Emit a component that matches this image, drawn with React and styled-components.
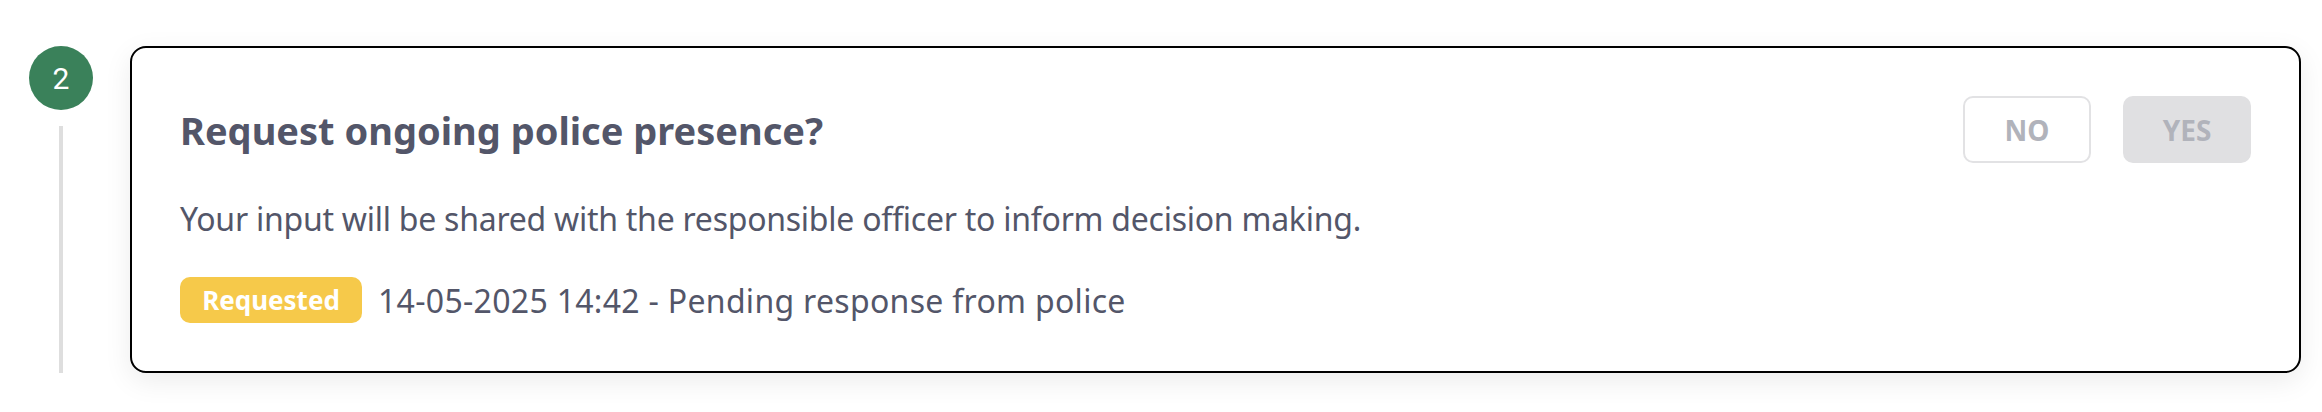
import React from 'react';
import styled, { createGlobalStyle } from 'styled-components';

const GlobalStyle = createGlobalStyle`
  body {
    margin: 0;
    background: #fff;
    font-family: "Noto Sans", "Liberation Sans", sans-serif;
  }
`;

// Linha da página: timeline à esquerda, card à direita
const Row = styled.div`
  display: flex;
  gap: 37px;
  padding: 46px 21px 0 29px;
  height: 412px;
  box-sizing: border-box;
`;

const Timeline = styled.div`
  display: flex;
  flex-direction: column;
  align-items: center;
  gap: 16px;
  width: 64px;
  height: 327px;
`;

const StepCircle = styled.div`
  width: 64px;
  height: 64px;
  border-radius: 50%;
  background: #3a815a;
  color: #fff;
  display: flex;
  align-items: center;
  justify-content: center;
  font-family: Roboto, sans-serif;
  font-size: 30px;
  font-weight: 400;
  flex-shrink: 0;
`;

const StepLine = styled.div`
  width: 4px;
  flex: 1;
  background: #dedede;
`;

const Card = styled.div`
  flex: 1;
  align-self: flex-start;
  border: 2px solid #000;
  border-radius: 16px;
  padding: 48px;
  background: #fff;
  box-shadow: 0 8px 28px rgba(0, 0, 0, 0.08);
  color: #535669;
`;

const Header = styled.div`
  display: flex;
  justify-content: space-between;
  align-items: center;
`;

const Title = styled.h2`
  margin: 0;
  font-size: 38px;
  font-weight: 700;
`;

const Actions = styled.div`
  display: flex;
  gap: 32px;
`;

const ChoiceButton = styled.button`
  width: 128px;
  height: 67px;
  box-sizing: border-box;
  border-radius: 10px;
  border: 2px solid ${(p) => (p.$filled ? '#e0e0e2' : '#e2e2e4')};
  background: ${(p) => (p.$filled ? '#e0e0e2' : '#fff')};
  color: #b1b3bb;
  font-family: inherit;
  font-size: 28px;
  font-weight: 700;
  cursor: not-allowed;
`;

const Description = styled.p`
  margin: 32px 0 0;
  font-size: 32px;
  line-height: 48px;
  letter-spacing: -0.25px;
`;

const Status = styled.div`
  display: flex;
  align-items: center;
  gap: 16px;
  margin-top: 34px;
`;

const Badge = styled.span`
  display: inline-flex;
  align-items: center;
  justify-content: center;
  width: 182px;
  height: 46px;
  border-radius: 10px;
  background: #f6c94a;
  color: #fff;
  font-size: 26px;
  font-weight: 700;
`;

const StatusText = styled.span`
  font-size: 32px;
  letter-spacing: 0.3px;
`;

const App = () => (
  <>
    <GlobalStyle />
    <Row>
      <Timeline>
        <StepCircle>2</StepCircle>
        <StepLine />
      </Timeline>
      <Card>
        <Header>
          <Title>Request ongoing police presence?</Title>
          <Actions>
            <ChoiceButton type="button">NO</ChoiceButton>
            <ChoiceButton type="button" $filled>YES</ChoiceButton>
          </Actions>
        </Header>
        <Description>
          Your input will be shared with the responsible officer to inform decision making.
        </Description>
        <Status>
          <Badge>Requested</Badge>
          <StatusText>14-05-2025 14:42 - Pending response from police</StatusText>
        </Status>
      </Card>
    </Row>
  </>
);

export default App;
